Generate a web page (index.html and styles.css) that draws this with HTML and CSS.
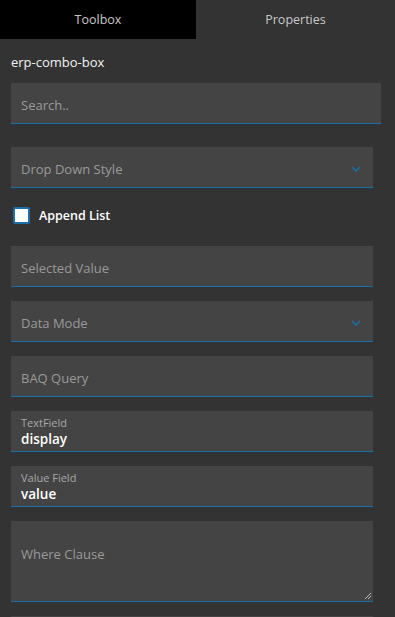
FILE: index.html
```html
<!DOCTYPE html>
<html>
<head>
    <title>Properties</title>
    <link rel="stylesheet" href="styles.css">
</head>
<body>
    <div class="tabs">
        <div class="tab tab-active">Toolbox</div>
        <div class="tab">Properties</div>
    </div>
    <div class="panel">
        <div class="panel-title">erp-combo-box</div>
        <div class="field search">
            <span class="placeholder">Search..</span>
        </div>
        <div class="props">
            <div class="field select">
                <span class="placeholder">Drop Down Style</span>
                <svg class="chevron" width="10" height="6" viewBox="0 0 10 6"><path d="M1 1 L5 5 L9 1" fill="none" stroke="#1a6fa8" stroke-width="1.6"/></svg>
            </div>
            <label class="check-row">
                <span class="checkbox"></span>
                <span class="check-label">Append List</span>
            </label>
            <div class="field">
                <span class="placeholder">Selected Value</span>
            </div>
            <div class="field select">
                <span class="placeholder">Data Mode</span>
                <svg class="chevron" width="10" height="6" viewBox="0 0 10 6"><path d="M1 1 L5 5 L9 1" fill="none" stroke="#1a6fa8" stroke-width="1.6"/></svg>
            </div>
            <div class="field">
                <span class="placeholder">BAQ Query</span>
            </div>
            <div class="field filled">
                <span class="small-label">TextField</span>
                <span class="value">display</span>
            </div>
            <div class="field filled">
                <span class="small-label">Value Field</span>
                <span class="value">value</span>
            </div>
            <div class="field textarea">
                <span class="placeholder">Where Clause</span>
                <svg class="grip" width="8" height="8" viewBox="0 0 8 8"><path d="M1 7 L7 1 M4 7 L7 4" stroke="#bbb" stroke-width="1"/></svg>
            </div>
            <div class="field"></div>
        </div>
    </div>
</body>
</html>
```
FILE: styles.css
```css
body {
    margin: 0;
    background-color: #333333;
    font-family: "Open Sans", sans-serif;
    font-size: 13px;
    color: #d0d0d0;
    overflow: hidden;
}

.tabs {
    display: flex;
    height: 39px;
}

.tab {
    flex: 1;
    display: flex;
    align-items: center;
    justify-content: center;
    color: #c8c8c8;
    font-size: 12.5px;
}

.tab-active {
    flex: 0 0 196px;
    background-color: #000;
}

.panel {
    padding: 14px 14px 0 11px;
}

.panel-title {
    color: #f2f2f2;
    font-size: 13px;
    height: 30px;
    line-height: 18px;
}

.field {
    position: relative;
    display: flex;
    align-items: center;
    padding: 3px 10px 0 10px;
    box-sizing: border-box;
    height: 41px;
    background-color: #444444;
    border-bottom: 1px solid #1a6fa8;
}

.search {
    margin-bottom: 23px;
}

.props {
    display: flex;
    flex-direction: column;
    gap: 14px;
    margin-right: 8px;
}

.placeholder {
    color: #9a9a9a;
    font-size: 13px;
}

.select {
    justify-content: space-between;
}

.chevron {
    margin-right: 2px;
}

.check-row {
    display: flex;
    align-items: center;
    height: 30px;
    padding: 0 0 3px 2px;
    box-sizing: border-box;
}

.checkbox {
    width: 13px;
    height: 13px;
    background-color: #fff;
    border: 2px solid #1a6fa8;
    border-radius: 2px;
    margin-right: 9px;
}

.check-label {
    color: #fff;
    font-weight: 600;
    font-size: 12.5px;
}

.filled {
    flex-direction: column;
    align-items: flex-start;
    justify-content: center;
    padding-top: 2px;
}

.small-label {
    color: #a8a8a8;
    font-size: 11px;
    line-height: 14px;
}

.value {
    color: #fff;
    font-weight: 600;
    font-size: 13.5px;
    line-height: 18px;
}

.textarea {
    height: 81px;
    align-items: flex-start;
    padding-top: 24px;
}

.grip {
    position: absolute;
    right: 1px;
    bottom: 1px;
}
```
